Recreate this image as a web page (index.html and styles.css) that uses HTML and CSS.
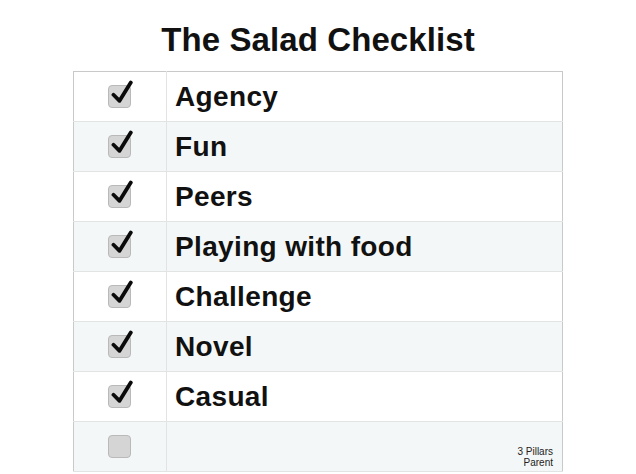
FILE: index.html
```html
<!DOCTYPE html>
<html>
<head>
<meta charset="utf-8">
<link rel="stylesheet" href="styles.css">
</head>
<body>
<h1 class="title">The Salad Checklist</h1>
<table class="checklist">
  <tbody>
    <tr><td class="box-cell"><span class="box checked"><svg viewBox="0 0 30 30" class="tick"><path d="M4 17 L11 24 L24 3"/></svg></span></td><td class="label">Agency</td></tr>
    <tr><td class="box-cell"><span class="box checked"><svg viewBox="0 0 30 30" class="tick"><path d="M4 17 L11 24 L24 3"/></svg></span></td><td class="label">Fun</td></tr>
    <tr><td class="box-cell"><span class="box checked"><svg viewBox="0 0 30 30" class="tick"><path d="M4 17 L11 24 L24 3"/></svg></span></td><td class="label">Peers</td></tr>
    <tr><td class="box-cell"><span class="box checked"><svg viewBox="0 0 30 30" class="tick"><path d="M4 17 L11 24 L24 3"/></svg></span></td><td class="label">Playing with food</td></tr>
    <tr><td class="box-cell"><span class="box checked"><svg viewBox="0 0 30 30" class="tick"><path d="M4 17 L11 24 L24 3"/></svg></span></td><td class="label">Challenge</td></tr>
    <tr><td class="box-cell"><span class="box checked"><svg viewBox="0 0 30 30" class="tick"><path d="M4 17 L11 24 L24 3"/></svg></span></td><td class="label">Novel</td></tr>
    <tr><td class="box-cell"><span class="box checked"><svg viewBox="0 0 30 30" class="tick"><path d="M4 17 L11 24 L24 3"/></svg></span></td><td class="label">Casual</td></tr>
    <tr><td class="box-cell"><span class="box"></span></td><td class="label note-cell"><span class="note">3 Pillars<br>Parent</span></td></tr>
  </tbody>
</table>
</body>
</html>
```
FILE: styles.css
```css
html, body {
  margin: 0;
  padding: 0;
  background: #ffffff;
}
body {
  font-family: "Liberation Sans", Arial, sans-serif;
  color: #111;
}
.title {
  margin: 0;
  height: 71px;
  box-sizing: border-box;
  padding-top: 20px;
  font-size: 33px;
  line-height: 40px;
  font-weight: bold;
  text-align: center;
  letter-spacing: 0.1px;
}
.checklist {
  width: 490px;
  margin: 0 auto;
  border-collapse: collapse;
  border: 1px solid #c9c9c9;
  border-bottom: none;
}
.checklist tr {
  height: 50px;
  border-bottom: 1px solid #e2e4e4;
}
.checklist tr:nth-child(even) {
  background: #f4f7f7;
}
.box-cell {
  width: 92px;
  padding: 0;
  text-align: center;
  border-right: 1px solid #e2e4e4;
  vertical-align: middle;
}
.box {
  display: inline-block;
  position: relative;
  width: 21px;
  height: 21px;
  border: 1px solid #b9b9b9;
  border-radius: 4px;
  background: #d5d5d5;
  vertical-align: middle;
  margin-left: -2px;
}
.tick {
  position: absolute;
  left: 1px;
  top: -6px;
  width: 26px;
  height: 26px;
  fill: none;
  stroke: #0a0a0a;
  stroke-width: 4.4;
  stroke-linecap: round;
  stroke-linejoin: round;
}
.label {
  padding: 0 0 0 8px;
  font-size: 28px;
  letter-spacing: 0.35px;
  font-weight: bold;
  vertical-align: middle;
}
.note-cell {
  text-align: right;
  vertical-align: bottom;
  padding-right: 9px;
  padding-bottom: 3px;
  letter-spacing: 0;
}
.note {
  display: block;
  font-size: 10px;
  line-height: 11px;
  font-weight: normal;
  color: #222;
}
```
